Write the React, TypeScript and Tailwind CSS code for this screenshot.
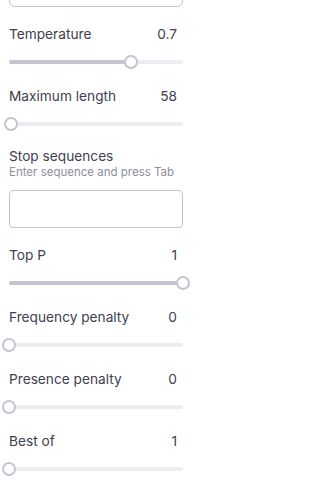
const sliders = [
  { label: "Temperature", value: "0.7", pct: 70 },
  { label: "Maximum length", value: "58", pct: 1 },
];

const sliders2 = [
  { label: "Top P", value: "1", pct: 100 },
  { label: "Frequency penalty", value: "0", pct: 0 },
  { label: "Presence penalty", value: "0", pct: 0 },
  { label: "Best of", value: "1", pct: 0 },
];

function Slider({ label, value, pct }: { label: string; value: string; pct: number }) {
  return (
    <div className="mt-[17px]">
      <div className="flex h-5 items-center justify-between pr-[6px] text-[13.7px] text-[#40414f]">
        <span>{label}</span>
        <span>{value}</span>
      </div>
      <div className="relative mt-[11px] h-[14px]">
        <div className="absolute inset-x-0 top-[5px] h-1 rounded-full bg-[#ececf1]" />
        <div
          className="absolute left-0 top-[5px] h-1 rounded-full bg-[#c5c5d2]"
          style={{ width: `${pct}%` }}
        />
        <div
          className="absolute top-0 h-[14px] w-[14px] -translate-x-1/2 rounded-full border-2 border-[#c5c5d2] bg-white"
          style={{ left: `${pct}%` }}
        />
      </div>
    </div>
  );
}

export default function App() {
  return (
    <div className="h-[491px] w-[203px] overflow-hidden bg-white pl-[9px] pr-[20px] font-['Inter',sans-serif]">
      <div className="-mt-[30px] h-[37px] rounded-md border border-[#c5c5d2]" />
      {sliders.map((s) => (
        <Slider key={s.label} {...s} />
      ))}
      <div className="mt-[16px]">
        <div className="h-[18px] text-[13.7px] leading-[18px] text-[#40414f]">Stop sequences</div>
        <div className="text-[11.5px] leading-[14px] text-[#8e8ea0]">Enter sequence and press Tab</div>
        <div className="mt-[11px] h-[38px] rounded-[4px] border border-[#c5c5d2]" />
      </div>
      {sliders2.map((s) => (
        <Slider key={s.label} {...s} />
      ))}
    </div>
  );
}
